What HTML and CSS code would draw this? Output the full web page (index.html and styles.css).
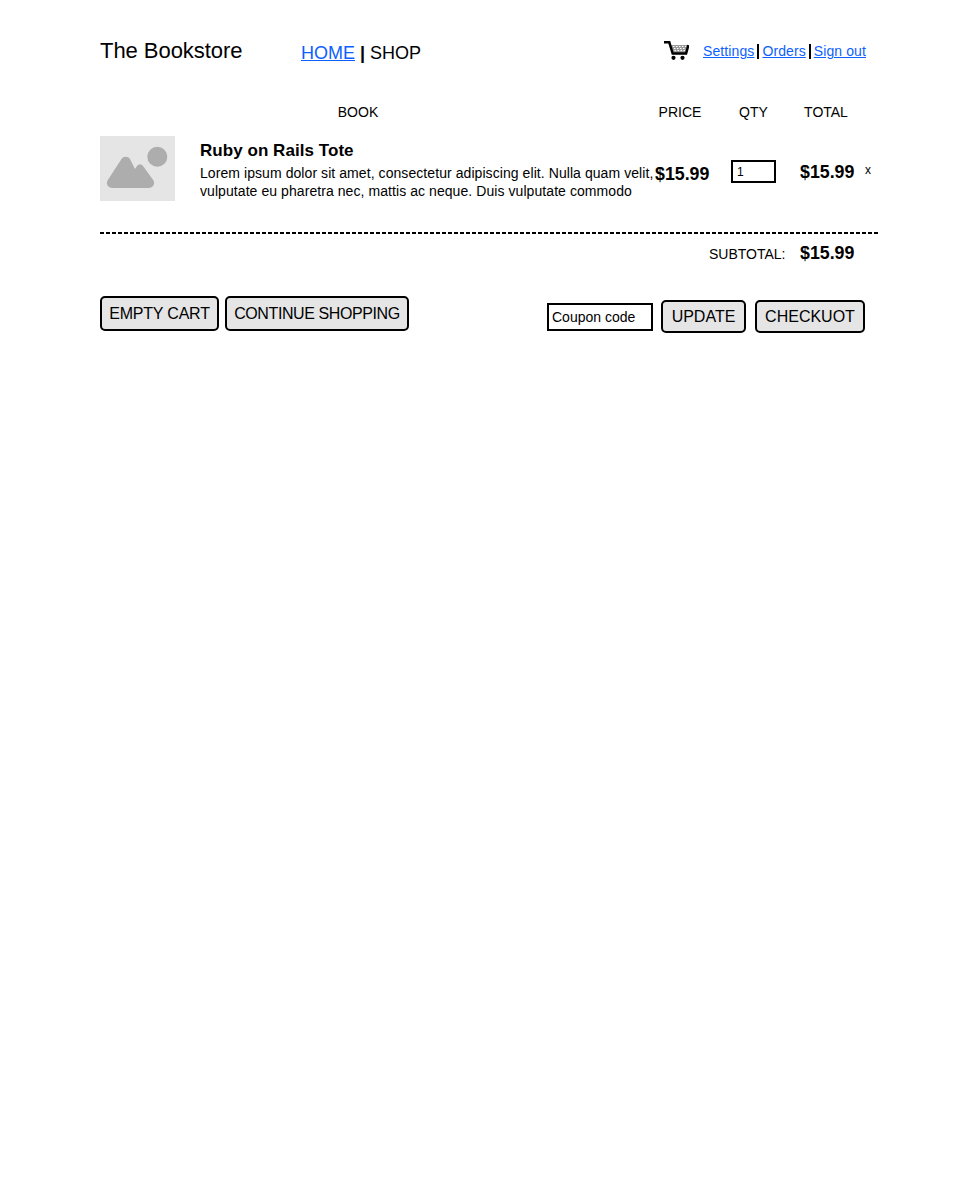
FILE: index.html
```html
<!DOCTYPE html>
<html lang="en">
<head>
  <meta charset="UTF-8" />
  <title>The Bookstore</title>
  <link rel="stylesheet" href="styles.css">
</head>
<body>
  <div class="page">
    <header class="top">
      <div class="logo">The Bookstore</div>
      <nav class="main-nav"><a href="#">HOME</a> <b>|</b> SHOP</nav>
      <div class="user-nav">
        <svg class="cart" width="25" height="19" viewBox="0 0 25 19">
          <path d="M7 4h17l-2.500 8h-12z" fill="#999"/>
          <path d="M9 5.500h13M10 7.500h12M10.500 9.500h10.500" stroke="#fff" stroke-width="1" stroke-dasharray="1.500 1.500" fill="none"/>
          <path d="M0 1.300h5.300l3.400 11.200h13.400l2.300-8.500" fill="none" stroke="#000" stroke-width="2.500"/>
          <circle cx="9.500" cy="16.800" r="2.100"/>
          <circle cx="18.500" cy="16.800" r="2.100"/>
        </svg>
        <div class="user-links">
          <a href="#">Settings</a><span class="sep"></span><a href="#">Orders</a><span class="sep"></span><a href="#">Sign out</a>
        </div>
      </div>
    </header>

    <div class="cart-head">
      <div class="col-book">BOOK</div>
      <div class="col-price">PRICE</div>
      <div class="col-qty">QTY</div>
      <div class="col-total">TOTAL</div>
    </div>

    <div class="cart-item">
      <div class="thumb">
        <svg width="75" height="65" viewBox="0 0 75 65">
          <circle cx="57.300" cy="20.700" r="10" fill="#adadad"/>
          <path d="M12 52H49a5 5 0 0 0 4.500-7.500L43 30a3.500 3.500 0 0 0-6 0L35 33 30 23a5 5 0 0 0-8.500 0L7.500 44.500A5 5 0 0 0 12 52z" fill="#adadad"/>
        </svg>
      </div>
      <div class="item-info">
        <div class="item-title">Ruby on Rails Tote</div>
        <p class="item-desc">Lorem ipsum dolor sit amet, consectetur adipiscing elit. Nulla quam velit, vulputate eu pharetra nec, mattis ac neque. Duis vulputate commodo</p>
      </div>
      <div class="item-price">$15.99</div>
      <div class="item-qty"><input class="qty-input" type="text" value="1"></div>
      <div class="item-total">$15.99</div>
      <div class="item-remove">x</div>
    </div>
    <div class="divider"></div>

    <div class="subtotal">
      <span class="subtotal-label">SUBTOTAL:</span>
      <span class="subtotal-value">$15.99</span>
    </div>

    <div class="actions">
      <div class="actions-left">
        <button class="btn btn-empty">EMPTY CART</button>
        <button class="btn btn-continue">CONTINUE SHOPPING</button>
      </div>
      <div class="actions-right">
        <input class="coupon" type="text" value="Coupon code">
        <button class="btn btn-update">UPDATE</button>
        <button class="btn btn-checkout">CHECKUOT</button>
      </div>
    </div>
  </div>
</body>
</html>
```

FILE: styles.css
```css
:root {
  --link: #0d5fff;
  --grey: #e5e5e5;
}

body {
  margin: 0;
  font-family: 'Liberation Sans', Arial, sans-serif;
  color: #000;
  background: #fff;
}

a {
  color: var(--link);
}

.page {
  width: 778px;
  margin-left: 100px;
  padding-top: 38px;
}

.top {
  display: flex;
  align-items: center;
  height: 26px;
  padding-right: 12px;
}

.logo {
  width: 201px;
  font-size: 22px;
  letter-spacing: -0.05px;
}

.main-nav {
  font-size: 18px;
  padding-top: 5px;
}

.user-nav {
  display: flex;
  align-items: center;
  margin-left: auto;
}

.cart {
  margin: 0 14px 2px 0;
}

.user-links {
  display: flex;
  align-items: center;
  font-size: 14px;
  letter-spacing: 0.1px;
}

.sep {
  width: 2px;
  height: 15px;
  margin: 0 3px;
  background: #000;
}

.cart-head {
  display: flex;
  margin-top: 40px;
  font-size: 14px;
  line-height: 16px;
  text-align: center;
}

.col-book {
  width: 516px;
  margin-right: 24px;
}

.col-price {
  width: 80px;
}

.col-qty {
  width: 67px;
}

.col-total {
  width: 78px;
}

.cart-item {
  display: flex;
  align-items: flex-start;
  margin-top: 16px;
  height: 96px;
}

.divider {
  height: 2px;
  background: repeating-linear-gradient(90deg, #000 0 4px, transparent 4px 6px);
}

.thumb {
  width: 75px;
  height: 65px;
  margin-right: 25px;
  background: var(--grey);
}

.thumb svg {
  display: block;
}

.item-info {
  width: 455px;
  padding-top: 4px;
}

.item-title {
  font-size: 17px;
  font-weight: bold;
  line-height: 22px;
  letter-spacing: 0.05px;
}

.item-desc {
  margin: 2px 0 0;
  font-size: 14px;
  line-height: 18px;
  letter-spacing: 0.07px;
}

.item-price,
.item-total,
.subtotal-value {
  font-size: 17.8px;
  font-weight: bold;
}

.item-price {
  width: 76px;
  padding-top: 28px;
}

.item-qty {
  width: 69px;
  padding-top: 24px;
}

.qty-input {
  display: block;
  width: 45px;
  height: 23px;
  box-sizing: border-box;
  padding: 0 4px;
  border: 2px solid #000;
  font-family: inherit;
  font-size: 12px;
}

.item-total {
  width: 65px;
  padding-top: 26px;
}

.item-remove {
  padding-top: 27px;
  font-size: 12px;
}

.subtotal {
  display: flex;
  align-items: center;
  margin-top: 9px;
  padding-left: 609px;
}

.subtotal-label {
  width: 91px;
  font-size: 14px;
}

.actions {
  display: flex;
  justify-content: space-between;
  align-items: flex-start;
  margin-top: 32px;
  padding-right: 13px;
}

.actions-left {
  display: flex;
  gap: 6px;
}

.actions-right {
  display: flex;
  align-items: center;
  gap: 8px;
  margin-top: 4px;
}

.btn {
  height: 35px;
  padding: 0;
  background: var(--grey);
  border: 2px solid #000;
  border-radius: 5px;
  font-family: inherit;
  font-size: 16px;
  color: #000;
}

.btn-empty {
  width: 119px;
  letter-spacing: -0.2px;
}

.btn-continue {
  width: 184px;
  letter-spacing: -0.4px;
}

.btn-update {
  width: 85px;
  height: 33px;
  margin-right: 1px;
}

.btn-checkout {
  width: 110px;
  height: 33px;
}

.coupon {
  width: 106px;
  height: 28px;
  box-sizing: border-box;
  padding: 0 3px;
  border: 2px solid #000;
  font-family: inherit;
  font-size: 14px;
}
```
